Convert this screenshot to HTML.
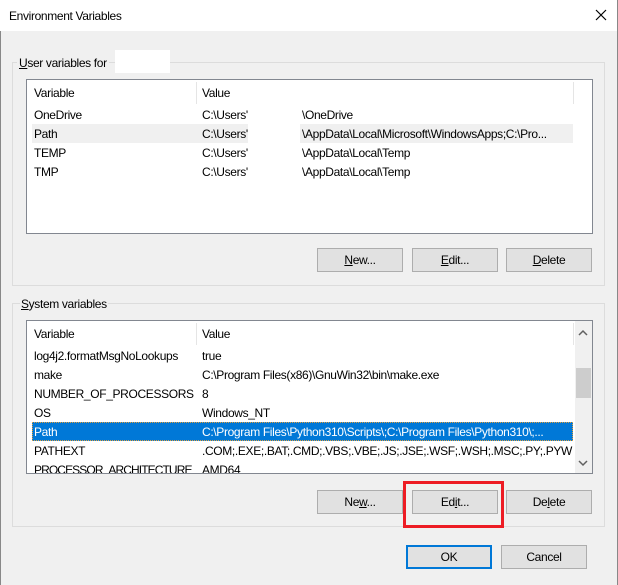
<!DOCTYPE html>
<html><head><meta charset="utf-8"><style>
*{margin:0;padding:0;box-sizing:border-box}
body{width:618px;height:585px;overflow:hidden;background:#f0f0f0;font-family:"Liberation Sans",sans-serif;font-size:12px;color:#000;position:relative;letter-spacing:-0.35px}
.a{position:absolute;white-space:nowrap}
#win{position:absolute;left:0;top:0;width:618px;height:585px;border:1px solid #888;border-bottom:none}
#title{position:absolute;left:0;top:0;width:617px;height:31px;background:#fff}
.grp{position:absolute;border:1px solid #dcdcdc}
.list{position:absolute;background:#fff;border:1px solid #828790}
.list .a{margin-top:1px}
.btn{position:absolute;height:24px;background:#e1e1e1;border:1px solid #adadad;text-align:center;line-height:23px}
u{text-decoration:underline}
</style></head><body>
<div id="win"></div>
<div id="title"></div>
<div class="a" style="left:9px;top:9px;font-size:12px">Environment Variables</div>
<svg class="a" style="left:595px;top:9px" width="12" height="12"><path d="M1 1L11 11M11 1L1 11" stroke="#000" stroke-width="1.2"/></svg>

<div class="grp" style="left:12px;top:62px;width:593px;height:224px"></div>
<div class="a" style="left:17px;top:56px;background:#f0f0f0;padding:0 2px"><u>U</u>ser variables for</div>
<div class="a" style="left:115px;top:50px;width:55px;height:23px;background:#fff"></div>
<div class="list" style="left:26px;top:79px;width:567px;height:155px">
 <div class="a" style="left:169px;top:1px;width:1px;height:22px;background:#e5e5e5"></div>
 <div class="a" style="left:546px;top:1px;width:1px;height:22px;background:#e5e5e5"></div>
 <div class="a" style="left:7px;top:5px">Variable</div>
 <div class="a" style="left:175px;top:5px">Value</div>
 <div class="a" style="left:5px;top:43px;width:541px;height:19px;background:#f0f0f0"></div>
 <div class="a" style="left:221px;top:24px;width:52px;height:110px;background:#fff"></div>
 <div class="a" style="left:7px;top:27px">OneDrive</div><div class="a" style="left:175px;top:27px">C:\Users'</div><div class="a" style="left:275px;top:27px">\OneDrive</div>
 <div class="a" style="left:7px;top:46px">Path</div><div class="a" style="left:175px;top:46px">C:\Users'</div><div class="a" style="left:275px;top:46px">\AppData\Local\Microsoft\WindowsApps;C:\Pro...</div>
 <div class="a" style="left:7px;top:65px">TEMP</div><div class="a" style="left:175px;top:65px">C:\Users'</div><div class="a" style="left:275px;top:65px">\AppData\Local\Temp</div>
 <div class="a" style="left:7px;top:84px">TMP</div><div class="a" style="left:175px;top:84px">C:\Users'</div><div class="a" style="left:275px;top:84px">\AppData\Local\Temp</div>
</div>
<div class="btn" style="left:317px;top:248px;width:86px"><u>N</u>ew...</div>
<div class="btn" style="left:412px;top:248px;width:86px"><u>E</u>dit...</div>
<div class="btn" style="left:506px;top:248px;width:86px"><u>D</u>elete</div>

<div class="grp" style="left:12px;top:303px;width:593px;height:224px"></div>
<div class="a" style="left:20px;top:297px;background:#f0f0f0;padding:0 1px"><u>S</u>ystem variables</div>
<div class="list" style="left:26px;top:320px;width:567px;height:154px;overflow:hidden">
 <div class="a" style="left:169px;top:1px;width:1px;height:22px;background:#e5e5e5"></div>
 <div class="a" style="left:546px;top:1px;width:1px;height:22px;background:#e5e5e5"></div>
 <div class="a" style="left:5px;top:100px;width:541px;height:19px;background:#0078d7;outline:1px dotted #e0a040;outline-offset:-1px"></div>
 <div class="a" style="left:7px;top:5px">Variable</div>
 <div class="a" style="left:175px;top:5px">Value</div>
 <div class="a" style="left:7px;top:27px">log4j2.formatMsgNoLookups</div><div class="a" style="left:175px;top:27px">true</div>
 <div class="a" style="left:7px;top:46px">make</div><div class="a" style="left:175px;top:46px">C:\Program Files(x86)\GnuWin32\bin\make.exe</div>
 <div class="a" style="left:7px;top:65px">NUMBER_OF_PROCESSORS</div><div class="a" style="left:175px;top:65px">8</div>
 <div class="a" style="left:7px;top:84px">OS</div><div class="a" style="left:175px;top:84px">Windows_NT</div>
 <div class="a" style="left:7px;top:103px;color:#fff">Path</div><div class="a" style="left:175px;top:103px;color:#fff">C:\Program Files\Python310\Scripts\;C:\Program Files\Python310\;...</div>
 <div class="a" style="left:7px;top:122px">PATHEXT</div><div class="a" style="left:175px;top:122px">.COM;.EXE;.BAT;.CMD;.VBS;.VBE;.JS;.JSE;.WSF;.WSH;.MSC;.PY;.PYW</div>
 <div class="a" style="left:7px;top:141px;letter-spacing:-0.9px">PROCESSOR_ARCHITECTURE</div><div class="a" style="left:175px;top:141px">AMD64</div>
 <div class="a" style="left:548px;top:-1px;width:17px;height:154px;background:#f0f0f0;margin:0"></div>
 <div class="a" style="left:549px;top:47px;width:15px;height:30px;background:#cdcdcd;margin:0"></div>
 <svg class="a" style="left:551px;top:8px;margin:0" width="10" height="8"><path d="M1 6L5 2L9 6" stroke="#606060" stroke-width="1.5" fill="none"/></svg>
 <svg class="a" style="left:551px;top:138px;margin:0" width="10" height="8"><path d="M1 2L5 6L9 2" stroke="#606060" stroke-width="1.5" fill="none"/></svg>
</div>
<div class="btn" style="left:317px;top:490px;width:86px">Ne<u>w</u>...</div>
<div class="btn" style="left:412px;top:490px;width:86px">Ed<u>i</u>t...</div>
<div class="btn" style="left:506px;top:490px;width:86px">De<u>l</u>ete</div>
<div class="a" style="left:403px;top:481px;width:101px;height:47px;border:3px solid #ed1c24"></div>

<div class="btn" style="left:406px;top:545px;width:86px;border:2px solid #0078d7;line-height:21px">OK</div>
<div class="btn" style="left:501px;top:545px;width:86px">Cancel</div>
</body></html>
